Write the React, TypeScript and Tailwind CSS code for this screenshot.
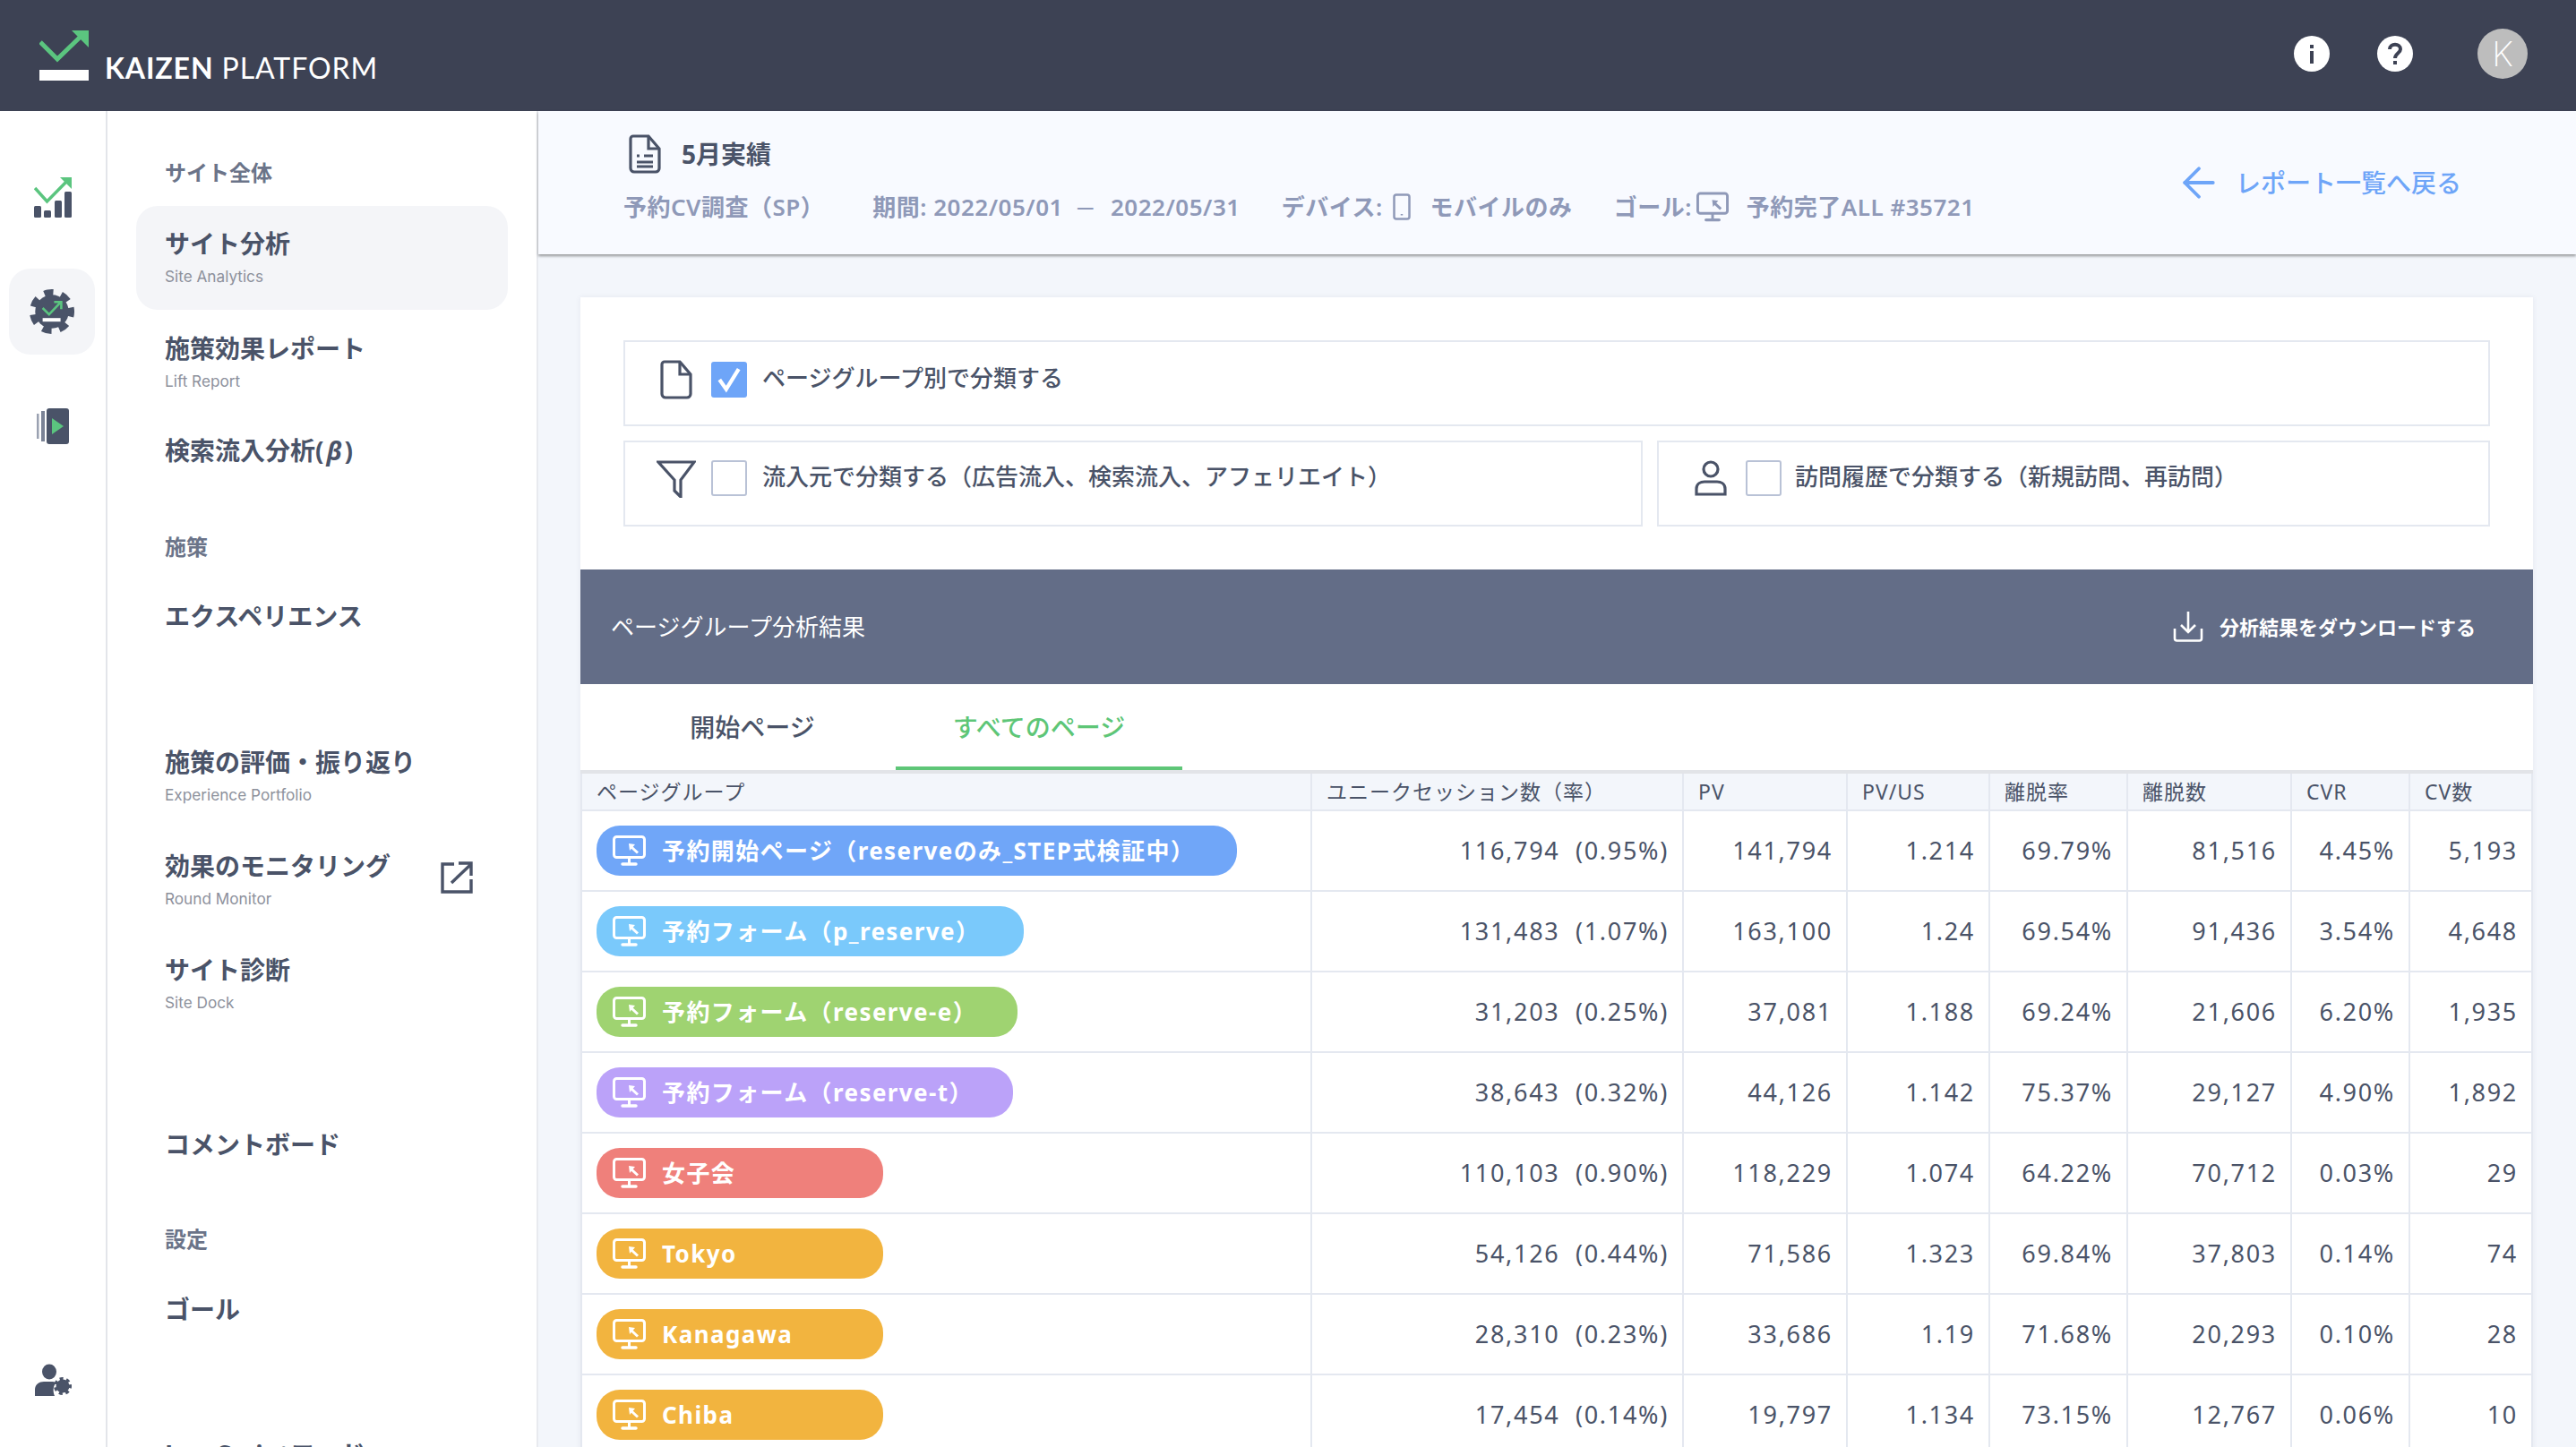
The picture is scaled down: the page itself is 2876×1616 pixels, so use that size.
import { ArrowLeft } from 'lucide-react';
import type { ReactNode } from 'react';

const green = '#5bc57f';
const slate = '#4a5368';

const MonitorIcon = ({ className }: { className: string }) => (
    <svg viewBox="0 0 37 34" className={className} fill="none" stroke="currentColor">
        <rect x="1.5" y="1.5" width="34" height="23" rx="3" strokeWidth="3" />
        <path d="M18.5 25v6" strokeWidth="3" />
        <path d="M11 32h15" strokeWidth="3.5" strokeLinecap="round" />
        <path d="M18 9l7 1-6 7z" fill="currentColor" stroke="none" />
        <path d="M21 13l7 6.5" strokeWidth="3" />
    </svg>
);

const Gear = ({ size, className }: { size: number; className?: string }) => (
    <svg viewBox="0 0 48 48" width={size} height={size} className={className}>
        <circle cx="24" cy="24" r="18" fill="currentColor" />
        <circle
            cx="24"
            cy="24"
            r="20"
            fill="none"
            stroke="currentColor"
            strokeWidth="8"
            strokeDasharray="9.5 8.45"
            transform="rotate(-12 24 24)"
        />
    </svg>
);

const Check = ({ color }: { color: string }) => (
    <path d="M2 10l9 9L27 2M18 1.5h10v10" fill="none" stroke={color} strokeWidth="3.2" />
);

const rows = [
    { name: '予約開始ページ（reserveのみ_STEP式検証中）', pill: 'w-[715px] bg-[#70a6f8]', v: ['116,794  (0.95%)', '141,794', '1.214', '69.79%', '81,516', '4.45%', '5,193'] },
    { name: '予約フォーム（p_reserve）', pill: 'w-[477px] bg-[#7ac9fb]', v: ['131,483  (1.07%)', '163,100', '1.24', '69.54%', '91,436', '3.54%', '4,648'] },
    { name: '予約フォーム（reserve-e）', pill: 'w-[470px] bg-[#9fd371]', v: ['31,203  (0.25%)', '37,081', '1.188', '69.24%', '21,606', '6.20%', '1,935'] },
    { name: '予約フォーム（reserve-t）', pill: 'w-[465px] bg-[#bba2f9]', v: ['38,643  (0.32%)', '44,126', '1.142', '75.37%', '29,127', '4.90%', '1,892'] },
    { name: '女子会', pill: 'w-[320px] bg-[#ef807b]', v: ['110,103  (0.90%)', '118,229', '1.074', '64.22%', '70,712', '0.03%', '29'] },
    { name: 'Tokyo', pill: 'w-[320px] bg-[#f2b43f]', v: ['54,126  (0.44%)', '71,586', '1.323', '69.84%', '37,803', '0.14%', '74'] },
    { name: 'Kanagawa', pill: 'w-[320px] bg-[#f2b43f]', v: ['28,310  (0.23%)', '33,686', '1.19', '71.68%', '20,293', '0.10%', '28'] },
    { name: 'Chiba', pill: 'w-[320px] bg-[#f2b43f]', v: ['17,454  (0.14%)', '19,797', '1.134', '73.15%', '12,767', '0.06%', '10'] },
];

const columns = [
    { label: 'ページグループ', width: 'w-[815px]' },
    { label: 'ユニークセッション数（率）', width: 'w-[415px]' },
    { label: 'PV', width: 'w-[183px]' },
    { label: 'PV/US', width: 'w-[159px]' },
    { label: '離脱率', width: 'w-[154px]' },
    { label: '離脱数', width: 'w-[183px]' },
    { label: 'CVR', width: 'w-[132px]' },
    { label: 'CV数', width: 'w-[137px]' },
];

function NavItem({
    title,
    sub,
    className,
    active,
}: {
    title: ReactNode;
    sub?: string;
    className: string;
    active?: boolean;
}) {
    return (
        <div className={`rounded-[24px] pl-[32px] pt-[24px] ${active ? 'bg-[#f4f5f8]' : ''} ${className}`}>
            <div className="text-[28px] leading-[36px] font-bold text-[#4a5368]">{title}</div>
            {sub && (
                <div className="mt-[7px] font-['Inter',sans-serif] text-[17.2px] leading-[24px] text-[#8d919c]">
                    {sub}
                </div>
            )}
        </div>
    );
}

const NavLabel = ({ children, className }: { children: string; className: string }) => (
    <div className={`pl-[32px] text-[24px] leading-[34px] font-bold text-[#6b7489] ${className}`}>{children}</div>
);

export default function App() {
    return (
        <div className="flex h-[1616px] w-[2876px] flex-col overflow-hidden bg-white font-['Noto_Sans','Noto_Sans_CJK_JP',sans-serif] text-[#4a5368]">
            <header className="flex h-[124px] shrink-0 items-center bg-[#3d4254] pr-[54px] pl-[44px]">
                <svg viewBox="0 0 55 56" className="h-[56px] w-[55px]">
                    <path d="M1 13l19 19L51 2" fill="none" stroke={green} strokeWidth="5" />
                    <path d="M36 0h19v19z" fill={green} />
                    <rect x="0" y="44" width="55" height="12" fill="#fff" />
                </svg>
                <div className="mt-[28px] ml-[18px] font-['Lato',sans-serif] text-[32px] leading-[36px] tracking-[0.9px] text-white">
                    <span className="font-bold">KAIZEN</span> PLATFORM
                </div>
                <svg viewBox="0 0 40 40" className="mb-[4px] ml-auto h-[40px] w-[40px]">
                    <circle cx="20" cy="20" r="20" fill="#fff" />
                    <rect x="18" y="17" width="4" height="14" fill="#3d4254" />
                    <rect x="18" y="10" width="4" height="4" fill="#3d4254" />
                </svg>
                <svg viewBox="0 0 40 40" className="mb-[4px] ml-[53px] h-[40px] w-[40px]">
                    <circle cx="20" cy="20" r="20" fill="#fff" />
                    <path d="M14 15c0-7 12-7 12 0 0 4-6 5-6 10" fill="none" stroke="#3d4254" strokeWidth="4" />
                    <rect x="18" y="28" width="4" height="4" fill="#3d4254" />
                </svg>
                <div className="mb-[4px] ml-[72px] flex h-[56px] w-[56px] items-center justify-center rounded-full bg-[#bdbdbd] font-['Inter',sans-serif] text-[38px] font-extralight text-white">
                    K
                </div>
            </header>

            <div className="flex min-h-0 flex-1">
                <aside className="flex w-[120px] shrink-0 flex-col items-center border-r-2 border-[#e3e5ea] pb-[57px]">
                    <svg viewBox="0 0 42 45" className="mt-[74px] h-[45px] w-[42px]">
                        <path d="M1 12l13.500 15L38 3" fill="none" stroke={green} strokeWidth="3.5" />
                        <path d="M29 0h13v13z" fill={green} />
                        <rect x="0" y="32" width="8" height="13" rx="1.5" fill={slate} />
                        <rect x="11" y="37" width="8" height="8" rx="1.5" fill={slate} />
                        <rect x="23" y="26" width="8" height="19" rx="1.5" fill={slate} />
                        <rect x="34" y="16" width="8" height="29" rx="1.5" fill={slate} />
                    </svg>
                    <div className="relative mt-[57px] flex h-[96px] w-[96px] -translate-x-[1px] items-center justify-center rounded-[24px] bg-[#f4f5f8] text-[#4a5368]">
                        <Gear size={50} />
                        <svg viewBox="0 0 30 30" className="absolute top-[36px] left-[36px] h-[24px] w-[24px]">
                            <Check color={green} />
                            <rect x="2" y="24" width="25" height="5" fill="#fff" />
                        </svg>
                    </div>
                    <svg viewBox="0 0 36 40" className="mt-[60px] h-[40px] w-[36px]">
                        <rect x="0" y="6" width="2.5" height="28" fill="#9aa1b1" />
                        <rect x="5" y="3" width="4" height="34" fill="#7b8396" />
                        <rect x="11" y="0" width="25" height="40" rx="3" fill={slate} />
                        <path d="M17 11l13 9-13 9z" fill={green} />
                    </svg>
                    <div className="relative mt-auto h-[36px] w-[40px] text-[#4a5368]">
                        <svg viewBox="0 0 40 36" className="h-[36px] w-[40px]">
                            <ellipse cx="16" cy="9" rx="8" ry="8.5" fill="currentColor" />
                            <path d="M0 36v-7c0-6 5-9 10-9h10c2 0 3 1 3 2-3 4-3 9-1 14z" fill="currentColor" />
                        </svg>
                        <Gear size={20} className="absolute top-[15px] left-[21px]" />
                    </div>
                </aside>

                <nav className="w-[479px] shrink-0 pt-[52px] pr-[32px] pl-[32px]">
                    <NavLabel className="">サイト全体</NavLabel>
                    <NavItem className="mt-[20px] h-[116px]" title="サイト分析" sub="Site Analytics" active />
                    <NavItem className="mt-[1px] h-[116px]" title="施策効果レポート" sub="Lift Report" />
                    <NavItem
                        className="-mt-[2px] h-[88px]"
                        title={
                            <>
                                検索流入分析(<i className="mx-[3px] font-bold">β</i>)
                            </>
                        }
                    />
                    <NavLabel className="mt-[45px]">施策</NavLabel>
                    <NavItem className="mt-[18px] h-[88px]" title="エクスペリエンス" />
                    <NavItem className="mt-[75px] h-[116px]" title="施策の評価・振り返り" sub="Experience Portfolio" />
                    <div className="relative">
                        <NavItem className="h-[116px]" title="効果のモニタリング" sub="Round Monitor" />
                        <svg viewBox="0 0 36 36" className="absolute top-[37px] left-[340px] h-[36px] w-[36px] text-[#4a5368]" fill="none" stroke="currentColor" strokeWidth="3.4">
                            <path d="M15 3H2v31h32V20" />
                            <path d="M12 24L33 4M20 2h14v14" />
                        </svg>
                    </div>
                    <NavItem className="h-[116px]" title="サイト診断" sub="Site Dock" />
                    <NavItem className="mt-[79px] h-[88px]" title="コメントボード" />
                    <NavLabel className="mt-[43px]">設定</NavLabel>
                    <NavItem className="mt-[19px] h-[88px]" title="ゴール" />
                    <NavItem className="mt-[74px] h-[88px]" title="JavaScriptコード" />
                </nav>

                <main className="min-w-0 flex-1 border-l-2 border-[#e8eaef] bg-[#f3f6fb]">
                    <div className="flex h-[160px] items-center justify-between bg-[#f8faff] pr-[128px] pl-[95px] shadow-[0_2px_3px_rgba(0,0,0,0.4)]">
                        <div className="mb-[9px]">
                            <div className="ml-[6px] flex h-[44px] items-center">
                                <svg viewBox="0 0 36 44" className="h-[44px] w-[36px]" fill="none" stroke={slate} strokeWidth="3.2">
                                    <path d="M5 2h17l12 14v22a4 4 0 0 1-4 4H6a4 4 0 0 1-4-4V5a3 3 0 0 1 3-3z" />
                                    <path d="M22 2v14h12M9 24h3M17 24h10M9 31h18M9 36h18" />
                                </svg>
                                <span className="ml-[23px] text-[28px] font-bold">5月実績</span>
                            </div>
                            <div className="mt-[19px] flex h-[36px] items-center text-[26px] font-semibold tracking-[0.5px] whitespace-nowrap text-[#8f99b8]">
                                <span>予約CV調査（SP）</span>
                                <span className="ml-[54px]">期間: 2022/05/01</span>
                                <span className="ml-[12px] w-[26px] text-center text-[19px]">—</span>
                                <span className="ml-[15px]">2022/05/31</span>
                                <span className="ml-[46px]">デバイス:</span>
                                <svg viewBox="0 0 20 30" className="ml-[11px] h-[30px] w-[20px]" fill="none" stroke="currentColor" strokeWidth="2.5">
                                    <rect x="1.5" y="1.5" width="17" height="27" rx="2.5" />
                                    <path d="M10 23v1.5" />
                                </svg>
                                <span className="ml-[22px]">モバイルのみ</span>
                                <span className="ml-[46px]">ゴール:</span>
                                <MonitorIcon className="ml-[5px] h-[34px] w-[36px]" />
                                <span className="ml-[20px]">予約完了ALL #35721</span>
                            </div>
                        </div>
                        <div className="flex items-center text-[28px] font-medium text-[#6ea5f8]">
                            <ArrowLeft className="h-[54px] w-[54px]" strokeWidth={1.7} />
                            <span className="ml-[14px]">レポート一覧へ戻る</span>
                        </div>
                    </div>

                    <section className="mt-[48px] mr-[48px] ml-[47px] bg-white shadow-[0_0_6px_rgba(60,70,100,0.08)]">
                        <div className="px-[48px] pt-[48px] pb-[48px] text-[26px] font-medium">
                            <div className="flex h-[96px] border-2 border-[#e4e8f0] pt-[20px] pl-[39px]">
                                <svg viewBox="0 0 36 44" className="h-[44px] w-[36px]" fill="none" stroke={slate} strokeWidth="3.2">
                                    <path d="M5 2h17l12 14v22a4 4 0 0 1-4 4H6a4 4 0 0 1-4-4V5a3 3 0 0 1 3-3z" />
                                    <path d="M22 2v14h12" />
                                </svg>
                                <div className="mt-[2px] ml-[21px] flex h-[40px] w-[40px] items-center justify-center rounded-[3px] bg-[#6ea5f8]">
                                    <svg viewBox="0 0 28 28" className="h-[30px] w-[30px]" fill="none" stroke="#fff" strokeWidth="4">
                                        <path d="M4 14l7 10L24 3" />
                                    </svg>
                                </div>
                                <span className="ml-[17px] leading-[40px]">ページグループ別で分類する</span>
                            </div>
                            <div className="mt-[16px] flex gap-[16px]">
                                <div className="flex h-[96px] w-[1138px] border-2 border-[#e4e8f0] pt-[20px] pl-[35px]">
                                    <svg viewBox="0 0 44 42" className="h-[42px] w-[44px]" fill="none" stroke={slate} strokeWidth="3.2">
                                        <path d="M2 2h40L27 22v19l-7-7V22z" />
                                    </svg>
                                    <div className="ml-[17px] h-[40px] w-[40px] rounded-[3px] border-2 border-[#b9c2d6] bg-white" />
                                    <span className="-mt-[2px] ml-[17px] leading-[40px]">流入元で分類する（広告流入、検索流入、アフェリエイト）</span>
                                </div>
                                <div className="flex h-[96px] w-[930px] border-2 border-[#e4e8f0] pt-[20px] pl-[40px]">
                                    <svg viewBox="0 0 36 40" className="h-[40px] w-[36px]" fill="none" stroke={slate} strokeWidth="3.2">
                                        <circle cx="18" cy="10" r="8" />
                                        <path d="M2 38v-6c0-6 5-8 9-8h14c4 0 9 2 9 8v6z" />
                                    </svg>
                                    <div className="ml-[21px] h-[40px] w-[40px] rounded-[3px] border-2 border-[#b9c2d6] bg-white" />
                                    <span className="-mt-[2px] ml-[15px] leading-[40px]">訪問履歴で分類する（新規訪問、再訪問）</span>
                                </div>
                            </div>
                        </div>

                        <div className="flex h-[128px] items-center justify-between bg-[#636d87] pr-[64px] pl-[34px] text-white">
                            <span className="text-[26px]">ページグループ分析結果</span>
                            <div className="flex items-center text-[22px] font-semibold">
                                <svg viewBox="0 0 34 34" className="h-[34px] w-[34px]" fill="none" stroke="#fff" strokeWidth="2.6">
                                    <path d="M17 0v22M9 15l8 8 8-8M2 19v11a2.5 2.5 0 0 0 2.500 2.500h25a2.500 2.500 0 0 0 2.500-2.500V19" />
                                </svg>
                                <span className="ml-[18px]">分析結果をダウンロードする</span>
                            </div>
                        </div>

                        <div className="flex h-[100px] border-b-4 border-[#e2e4e8] pl-[32px]">
                            <div className="flex h-[96px] w-[320px] items-center justify-center text-[28px] font-medium text-[#4a5368]">
                                開始ページ
                            </div>
                            <div className="flex h-[96px] w-[320px] items-center justify-center border-b-4 border-[#5ec677] pt-[4px] text-[28px] font-medium text-[#5ec677]">
                                すべてのページ
                            </div>
                        </div>

                        <table className="w-[2178px] table-fixed border-separate border-spacing-0 border-l-2 border-[#e4e8f0]">
                            <colgroup>
                                {columns.map((c) => (
                                    <col key={c.label} className={c.width} />
                                ))}
                            </colgroup>
                            <thead>
                                <tr className="h-[42px] bg-[#f3f6fb]">
                                    {columns.map((c) => (
                                        <th
                                            key={c.label}
                                            className="border-r-2 border-b-2 border-[#e4e8f0] pl-[16px] text-left text-[23px] font-normal tracking-[1px] whitespace-nowrap text-[#4a5368]"
                                        >
                                            {c.label}
                                        </th>
                                    ))}
                                </tr>
                            </thead>
                            <tbody>
                                {rows.map((r) => (
                                    <tr key={r.name} className="h-[90px]">
                                        <td className="border-r-2 border-b-2 border-[#e4e8f0] pl-[16px]">
                                            <div className={`flex h-[56px] items-center rounded-[26px] pl-[18px] text-[26px] font-bold tracking-[1.4px] whitespace-nowrap text-white ${r.pill}`}>
                                                <MonitorIcon className="h-[34px] w-[37px]" />
                                                <span className="ml-[18px]">{r.name}</span>
                                            </div>
                                        </td>
                                        {r.v.map((value, i) => (
                                            <td
                                                key={i}
                                                className="border-r-2 border-b-2 border-[#e4e8f0] pr-[15px] text-right text-[27px] tracking-[1.7px] whitespace-pre text-[#4a5368]"
                                            >
                                                {value}
                                            </td>
                                        ))}
                                    </tr>
                                ))}
                            </tbody>
                        </table>
                    </section>
                </main>
            </div>
        </div>
    );
}
